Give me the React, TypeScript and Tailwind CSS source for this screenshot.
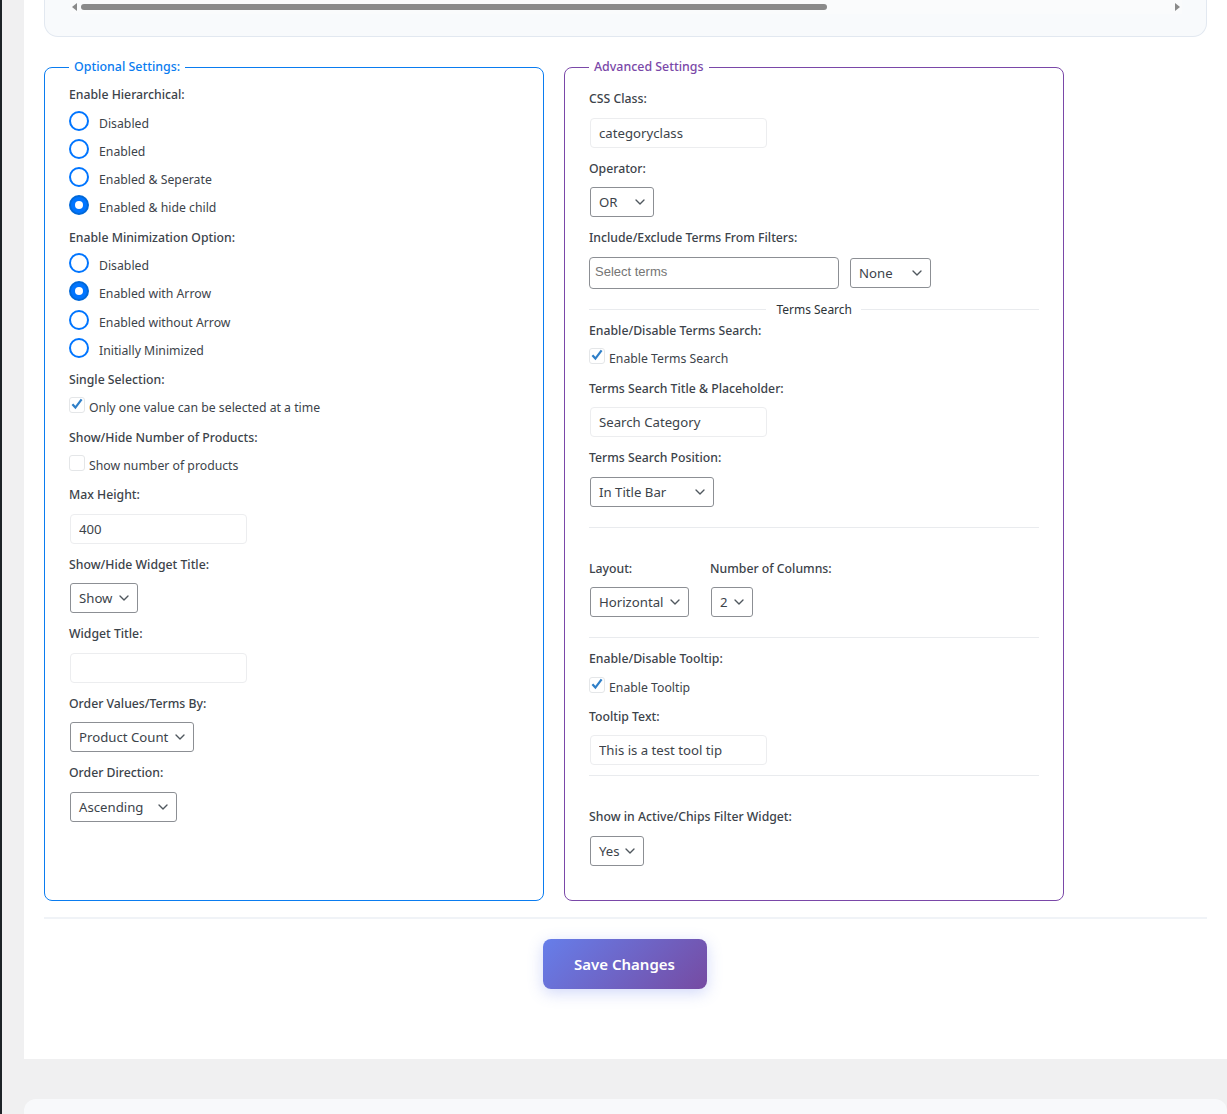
import type { ReactNode } from 'react';
import { ChevronDown } from 'lucide-react';

const fontStack = 'font-["Noto_Sans",sans-serif]';

function FieldLabel({ children, className = '' }: { children: ReactNode; className?: string }) {
  return (
    <div className={`h-[18px] pt-px text-[12.25px] font-medium leading-[18px] text-[#3c434a] ${className}`}>
      {children}
    </div>
  );
}

function Radio({ label, checked = false, className = '' }: { label: string; checked?: boolean; className?: string }) {
  return (
    <div className={`flex h-[28px] items-start ${className}`}>
      <span
        className={`flex h-5 w-5 shrink-0 items-center justify-center rounded-full border-2 ${
          checked ? 'border-[#0068d8] bg-[#0075ff]' : 'border-[#0075ff] bg-white'
        }`}
      >
        {checked && <span className="h-2 w-2 rounded-full bg-white" />}
      </span>
      <span className="ml-[10px] mt-[4px] text-[12.25px] leading-[18px] text-[#3c434a]">{label}</span>
    </div>
  );
}

function Check({ label, checked = false }: { label: string; checked?: boolean }) {
  return (
    <div className="flex h-[18px] items-start">
      <span className="relative -mt-[1px] h-4 w-4 shrink-0 rounded-[3px] border border-[#e4e6e8] bg-white">
        {checked && (
          <svg viewBox="0 0 16 16" className="absolute -left-[1px] -top-[2px] h-4 w-4">
            <path d="M3.4 8.2 6.4 11.6 12.6 3.4" fill="none" stroke="#2f7fc8" strokeWidth="2.2" />
          </svg>
        )}
      </span>
      <span className="ml-1 mt-px text-[12.25px] leading-[18px] text-[#3c434a]">{label}</span>
    </div>
  );
}

function TextBox({ value = '', className = '' }: { value?: string; className?: string }) {
  return (
    <input
      readOnly
      value={value}
      className={`ml-px block h-[30px] w-[177px] rounded-[4px] border border-[#ecedef] bg-white px-2 text-[13.2px] text-[#3c434a] outline-none ${className}`}
    />
  );
}

function SelectBox({ value, className = '' }: { value: string; className?: string }) {
  return (
    <div
      className={`ml-px flex h-[30px] items-center justify-between whitespace-nowrap rounded-[3px] border border-[#8c8f94] bg-white pl-2 pr-[5px] text-[13.2px] text-[#3c434a] ${className}`}
    >
      <span className="pt-px">{value}</span>
      <ChevronDown size={16} strokeWidth={2} className="shrink-0 text-[#50575e]" />
    </div>
  );
}

function Rule({ className = '' }: { className?: string }) {
  return <div className={`h-px bg-[#e9ebee] ${className}`} />;
}

function Panel({
  title,
  titleColor,
  borderColor,
  children,
}: {
  title: string;
  titleColor: string;
  borderColor: string;
  children: ReactNode;
}) {
  return (
    <fieldset className={`h-[844px] w-[500px] rounded-lg border px-6 ${borderColor}`}>
      <legend className={`px-[5px] py-px text-[12.4px] font-medium leading-[18px] ${titleColor}`}>{title}</legend>
      {children}
    </fieldset>
  );
}

function OptionalSettings() {
  return (
    <Panel title="Optional Settings:" titleColor="text-[#0a7cf0]" borderColor="border-[#0a7cf0]">
      <FieldLabel className="mt-[8px]">Enable Hierarchical:</FieldLabel>
      <div className="mt-[8px]">
        <Radio label="Disabled" />
        <Radio label="Enabled" />
        <Radio label="Enabled & Seperate" />
        <Radio label="Enabled & hide child" checked />
      </div>
      <FieldLabel className="mt-[5px]">Enable Minimization Option:</FieldLabel>
      <div className="mt-[7px]">
        <Radio label="Disabled" />
        <Radio label="Enabled with Arrow" checked />
        <Radio label="Enabled without Arrow" className="mt-px" />
        <Radio label="Initially Minimized" />
      </div>
      <FieldLabel className="mt-[4px]">Single Selection:</FieldLabel>
      <div className="mt-[10px]">
        <Check label="Only one value can be selected at a time" checked />
      </div>
      <FieldLabel className="mt-[12px]">Show/Hide Number of Products:</FieldLabel>
      <div className="mt-[10px]">
        <Check label="Show number of products" />
      </div>
      <FieldLabel className="mt-[11px]">Max Height:</FieldLabel>
      <TextBox value="400" className="mt-[11px]" />
      <FieldLabel className="mt-[11px]">Show/Hide Widget Title:</FieldLabel>
      <SelectBox value="Show" className="mt-[10px] w-[68px]" />
      <FieldLabel className="mt-[11px]">Widget Title:</FieldLabel>
      <TextBox className="mt-[11px]" />
      <FieldLabel className="mt-[11px]">Order Values/Terms By:</FieldLabel>
      <SelectBox value="Product Count" className="mt-[10px] w-[124px]" />
      <FieldLabel className="mt-[11px]">Order Direction:</FieldLabel>
      <SelectBox value="Ascending" className="mt-[11px] w-[107px]" />
    </Panel>
  );
}

function AdvancedSettings() {
  return (
    <Panel title="Advanced Settings" titleColor="text-[#7a48a8]" borderColor="border-[#7a48a8]">
      <FieldLabel className="mt-[12px]">CSS Class:</FieldLabel>
      <TextBox value="categoryclass" className="mt-[11px]" />
      <FieldLabel className="mt-[11px]">Operator:</FieldLabel>
      <SelectBox value="OR" className="mt-[10px] w-[64px]" />
      <FieldLabel className="mt-[11px]">Include/Exclude Terms From Filters:</FieldLabel>
      <div className="mt-[11px] flex items-center gap-[10px]">
        <div className="flex h-[32px] w-[250px] items-center rounded-[4px] border border-[#8c8f94] pb-[3px] pl-[5px] font-['Liberation_Sans',sans-serif] text-[13px] text-[#757575]">
          Select terms
        </div>
        <SelectBox value="None" className="w-[81px]" />
      </div>
      <div className="mt-[11px] flex h-[18px] items-center">
        <Rule className="flex-1" />
        <span className="pl-[10px] pr-[9px] pt-px text-[12px] leading-[18px] text-[#2c3338]">Terms Search</span>
        <Rule className="w-[178px]" />
      </div>
      <FieldLabel className="mt-[3px]">Enable/Disable Terms Search:</FieldLabel>
      <div className="mt-[10px]">
        <Check label="Enable Terms Search" checked />
      </div>
      <FieldLabel className="mt-[12px]">Terms Search Title & Placeholder:</FieldLabel>
      <TextBox value="Search Category" className="mt-[10px]" />
      <FieldLabel className="mt-[11px]">Terms Search Position:</FieldLabel>
      <SelectBox value="In Title Bar" className="mt-[11px] w-[124px]" />
      <Rule className="mt-[20px]" />
      <div className="mt-[31px] flex">
        <div>
          <FieldLabel>Layout:</FieldLabel>
          <SelectBox value="Horizontal" className="mt-[10px] w-[99px]" />
        </div>
        <div className="ml-[21px]">
          <FieldLabel>Number of Columns:</FieldLabel>
          <SelectBox value="2" className="mt-[10px] w-[42px]" />
        </div>
      </div>
      <Rule className="mt-[20px]" />
      <FieldLabel className="mt-[11px]">Enable/Disable Tooltip:</FieldLabel>
      <div className="mt-[11px]">
        <Check label="Enable Tooltip" checked />
      </div>
      <FieldLabel className="mt-[11px]">Tooltip Text:</FieldLabel>
      <TextBox value="This is a test tool tip" className="mt-[10px]" />
      <Rule className="mt-[10px]" />
      <FieldLabel className="mt-[31px]">Show in Active/Chips Filter Widget:</FieldLabel>
      <SelectBox value="Yes" className="mt-[11px] w-[54px]" />
    </Panel>
  );
}

export default function App() {
  return (
    <div className={`flex h-[1114px] overflow-hidden bg-[#f0f0f1] ${fontStack}`}>
      <div className="w-[2px] shrink-0 bg-[#1d2327]" />
      <main className="ml-[22px] flex-1">
        <section className="h-[1059px] bg-white pl-5 pr-5">
          <div className="h-[37px] rounded-b-[14px] border border-t-0 border-[#e2e8f0] bg-[#f8fafc] pl-[25px] pr-[24px]">
            <div className="flex h-[14px] items-center bg-[#fafbfc] px-[2px]">
              <span className="h-0 w-0 border-y-[4px] border-r-[5px] border-y-transparent border-r-[#8a8a8a]" />
              <span className="ml-[4px] h-[6px] w-[746px] rounded-full bg-[#8a8a8a]" />
              <span className="ml-auto h-0 w-0 border-y-[4px] border-l-[5px] border-y-transparent border-l-[#8a8a8a]" />
            </div>
          </div>
          <div className="mt-[20px] flex gap-5">
            <OptionalSettings />
            <AdvancedSettings />
          </div>
          <div className="mt-[16px] h-[2px] bg-[#f0f3f7]" />
          <div className="mt-5 flex justify-center pr-[2px]">
            <button className="h-[50px] w-[164px] rounded-lg bg-[linear-gradient(135deg,#667eea,#764ba2)] text-[15px] font-semibold text-white shadow-[0_4px_15px_rgba(102,126,234,0.3)]">
              Save Changes
            </button>
          </div>
        </section>
        <section className="mt-10 h-[40px] rounded-t-xl bg-[#f8f9fb]" />
      </main>
    </div>
  );
}
